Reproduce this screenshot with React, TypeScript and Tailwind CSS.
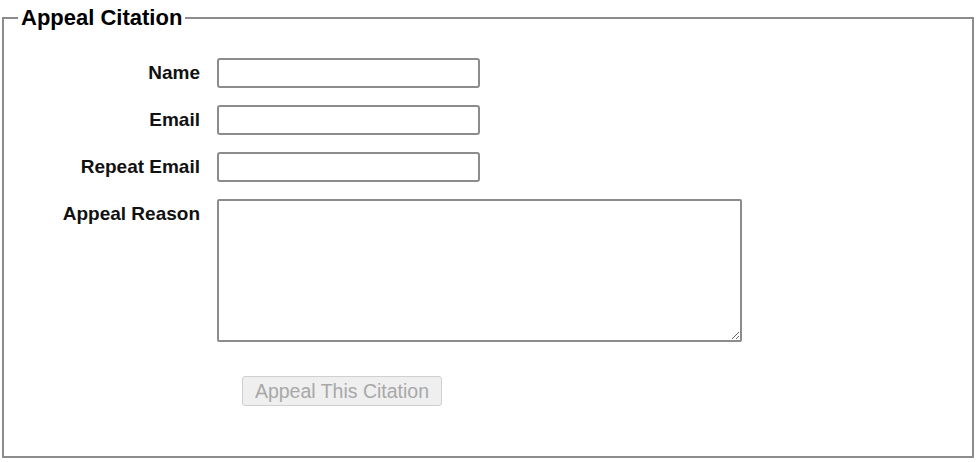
export default function App() {
  const font = { fontFamily: '"Liberation Sans", Arial, sans-serif' };
  const rows = ["Name", "Email", "Repeat Email"];
  return (
    <div className="w-[977px] h-[462px] bg-white pt-[5px] pl-[2px] pr-[3px]" style={font}>
      <fieldset className="border-2 border-[#8c8c8c] h-[453px] pt-[28px] pl-0 pr-0">
        <legend className="ml-[14px] px-[3px] text-[22px] font-bold text-black leading-[25px]">
          Appeal Citation
        </legend>
        <div className="grid grid-cols-[196px_1fr] gap-x-[17px] gap-y-[17px]">
          {rows.map((r) => (
            <div key={r} className="contents">
              <label className="text-right text-[19px] font-bold text-[#111] pt-[4px] leading-[22px]">
                {r}
              </label>
              <input
                type="text"
                className="w-[263px] h-[30px] border-2 border-[#8c8c8c] rounded-[3px] bg-white"
              />
            </div>
          ))}
          <label className="text-right text-[19px] font-bold text-[#111] pt-[4px] leading-[22px]">
            Appeal Reason
          </label>
          <textarea className="w-[525px] h-[143px] border-2 border-[#8c8c8c] rounded-[2px] bg-white" />
        </div>
        <div className="pl-[238px] pt-[34px]">
          <button
            disabled
            className="w-[200px] h-[30px] bg-[#efefef] border border-[#d0d0d0] rounded-[3px] text-[19.5px] text-[#a8a8a8] leading-[22px]"
          >
            Appeal This Citation
          </button>
        </div>
      </fieldset>
    </div>
  );
}
